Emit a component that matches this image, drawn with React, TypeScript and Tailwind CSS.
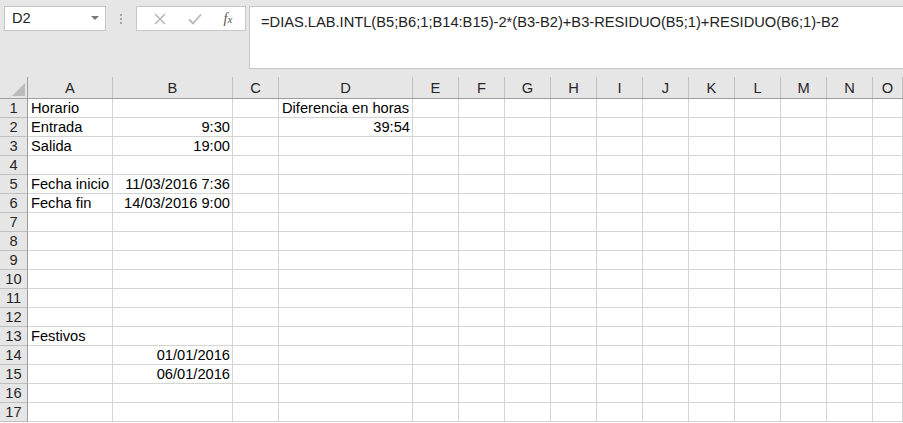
import React from "react";

type Col = { l: string; w: string };
const cols: Col[] = [
  { l: "A", w: "w-[85px]" },
  { l: "B", w: "w-[120px]" },
  { l: "C", w: "w-[46px]" },
  { l: "D", w: "w-[134px]" },
  { l: "E", w: "w-[46px]" },
  { l: "F", w: "w-[46px]" },
  { l: "G", w: "w-[46px]" },
  { l: "H", w: "w-[46px]" },
  { l: "I", w: "w-[46px]" },
  { l: "J", w: "w-[46px]" },
  { l: "K", w: "w-[46px]" },
  { l: "L", w: "w-[46px]" },
  { l: "M", w: "w-[46px]" },
  { l: "N", w: "w-[46px]" },
  { l: "O", w: "flex-1" },
];

type Cell = { v: string; r?: boolean };
const data: Record<number, Record<string, Cell>> = {
  1: { A: { v: "Horario" }, D: { v: "Diferencia en horas" } },
  2: { A: { v: "Entrada" }, B: { v: "9:30", r: true }, D: { v: "39:54", r: true } },
  3: { A: { v: "Salida" }, B: { v: "19:00", r: true } },
  5: { A: { v: "Fecha inicio" }, B: { v: "11/03/2016 7:36", r: true } },
  6: { A: { v: "Fecha fin" }, B: { v: "14/03/2016 9:00", r: true } },
  13: { A: { v: "Festivos" } },
  14: { B: { v: "01/01/2016", r: true } },
  15: { B: { v: "06/01/2016", r: true } },
};

const rows = Array.from({ length: 17 }, (_, i) => i + 1);

export default function App() {
  return (
    <div
      className="w-[903px] h-[423px] overflow-hidden bg-white text-[14.67px] text-black"
      style={{ fontFamily: '"Liberation Sans", Arial, sans-serif' }}
    >
      {/* Toolbar */}
      <div className="h-[77px] bg-[#e6e6e6] flex items-start pt-[6px] pl-[4px]">
        <div className="w-[102px] h-[25px] bg-white border border-[#c6c6c6] flex items-center pl-[7px] pr-[6px] text-[#222]">
          <span className="flex-1 leading-none">D2</span>
          <svg width="8" height="5" viewBox="0 0 8 5">
            <path d="M0 0 L8 0 L4 4 Z" fill="#777" />
          </svg>
        </div>
        <div className="w-[30px] h-[25px] flex flex-col items-center justify-center gap-[2px]">
          <div className="w-[2px] h-[2px] bg-[#a6a6a6]" />
          <div className="w-[2px] h-[2px] bg-[#a6a6a6]" />
          <div className="w-[2px] h-[2px] bg-[#a6a6a6]" />
        </div>
        <div className="w-[110px] h-[25px] bg-white border border-[#c6c6c6] flex items-center">
          <div className="w-[40px] flex justify-center pl-[6px]">
            <svg width="12" height="12" viewBox="0 0 12 12">
              <path d="M1 1 L11 11 M11 1 L1 11" stroke="#b8b8b8" strokeWidth="1.6" />
            </svg>
          </div>
          <div className="w-[36px] flex justify-center">
            <svg width="14" height="12" viewBox="0 0 14 12">
              <path d="M1 6.5 L5 10.5 L13 1.5" stroke="#b8b8b8" strokeWidth="1.8" fill="none" />
            </svg>
          </div>
          <div
            className="flex-1 flex justify-center italic text-[14px] text-[#555] pr-[2px]"
            style={{ fontFamily: '"Liberation Serif", "Times New Roman", serif' }}
          >
            <span>
              f<span className="text-[11px]">x</span>
            </span>
          </div>
        </div>
        <div className="ml-[3px] flex-1 h-[63px] bg-white border border-r-0 border-[#c6c6c6] pl-[11px] pt-[4px] text-[#222] whitespace-nowrap">
          =DIAS.LAB.INTL(B5;B6;1;B14:B15)-2*(B3-B2)+B3-RESIDUO(B5;1)+RESIDUO(B6;1)-B2
        </div>
      </div>

      {/* Column headers */}
      <div className="flex h-[22px] bg-[#e6e6e6] border-b border-[#9e9e9e]">
        <div className="w-[28px] shrink-0 h-full border-r border-[#9e9e9e] relative">
          <svg className="absolute left-[12px] top-[6px]" width="13" height="13" viewBox="0 0 13 13">
            <path d="M13 0 L13 13 L0 13 Z" fill="#bcbcbc" />
          </svg>
        </div>
        {cols.map((c) => (
          <div
            key={c.l}
            className={`${c.w} shrink-0 h-full border-r border-[#c0c0c0] flex items-end justify-center pb-[1px] text-[#262626] leading-[18px]`}
          >
            {c.l}
          </div>
        ))}
      </div>

      {/* Rows */}
      {rows.map((r) => (
        <div key={r} className="flex h-[19px]">
          <div className="w-[28px] shrink-0 h-full bg-[#e6e6e6] border-r border-b border-r-[#9e9e9e] border-b-[#c0c0c0] flex items-center justify-center text-[#262626] leading-[18px]">
            {r}
          </div>
          {cols.map((c) => {
            const cell = data[r]?.[c.l];
            return (
              <div
                key={c.l}
                className={`${c.w} shrink-0 h-full border-r border-b border-[#d4d4d4] leading-[18px] whitespace-nowrap overflow-visible ${
                  cell?.r ? "text-right pr-[2px]" : "pl-[3px]"
                }`}
              >
                {cell?.v ?? ""}
              </div>
            );
          })}
        </div>
      ))}
    </div>
  );
}
